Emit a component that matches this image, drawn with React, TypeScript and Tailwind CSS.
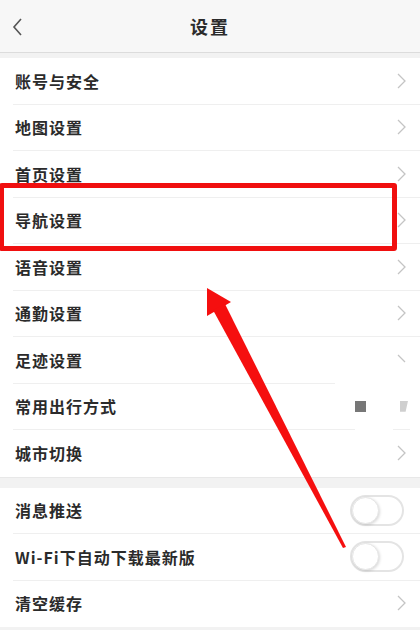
const rows1 = [
  "账号与安全",
  "地图设置",
  "首页设置",
  "导航设置",
  "语音设置",
  "通勤设置",
  "足迹设置",
  "常用出行方式",
  "城市切换",
];

const Chevron = () => (
  <svg width="12" height="18" viewBox="0 0 12 18" className="shrink-0">
    <path d="M2 2 L9 9 L2 16" fill="none" stroke="#c4c4c4" strokeWidth="1.3" />
  </svg>
);

const Toggle = () => (
  <div className="mr-[4px] flex items-center w-[54px] h-[31px] rounded-full border-2 border-[#e4e4e4] bg-white">
    <div className="w-[27px] h-[27px] rounded-full bg-white border border-[#e6e6e6] shadow-[1px_1px_3px_rgba(0,0,0,0.15)]" />
  </div>
);

type RowProps = {
  label: string;
  right?: React.ReactNode;
  divider?: "full" | "none" | "short" | "split";
};

const Divider = ({ kind }: { kind: RowProps["divider"] }) => {
  if (kind === "none") return <div className="h-px" />;
  if (kind === "short")
    return (
      <div className="h-px flex">
        <div className="w-[322px] bg-[#efefef]" />
      </div>
    );
  if (kind === "split")
    return (
      <div className="h-px flex">
        <div className="w-[342px] bg-[#efefef]" />
        <div className="w-[38px]" />
        <div className="w-[17px] bg-[#efefef]" />
      </div>
    );
  return <div className="h-px bg-[#efefef]" />;
};

const Row = ({ label, right, divider = "full" }: RowProps) => (
  <div className="bg-white pl-[13px] flex flex-col">
    <div className="h-[45.5px] flex items-center justify-between pl-[2px] pr-[12px]">
      <span className="text-[16px] font-bold text-[#2b2b2b] tracking-[1px]">{label}</span>
      {right ?? <Chevron />}
    </div>
    <Divider kind={divider} />
  </div>
);

const App = () => {
  return (
    <div
      className="relative w-[420px] h-[630px] overflow-hidden bg-[#f2f2f2] flex flex-col"
      style={{ fontFamily: '"Noto Sans CJK SC", "Noto Sans", sans-serif' }}
    >
      {/* header */}
      <div className="h-[53px] shrink-0 bg-[#f7f7f7] border-b border-[#dcdcdc] grid grid-cols-[60px_1fr_60px] items-center">
        <div className="pl-[11px] pt-[1px] flex items-center">
          <svg width="14" height="20" viewBox="0 0 14 20">
            <path d="M10 2 L3 10 L10 18" fill="none" stroke="#555" strokeWidth="1.6" />
          </svg>
        </div>
        <span className="text-center text-[18px] font-bold text-[#2b2b2b] tracking-[2px]">设置</span>
        <div />
      </div>

      <div className="mt-[5px] flex flex-col">
        {rows1.map((r, i) => {
          if (r === "足迹设置")
            return (
              <Row
                key={r}
                label={r}
                divider="short"
                right={
                  <svg width="12" height="18" viewBox="0 0 12 18">
                    <path d="M2 4 L9 11" fill="none" stroke="#c4c4c4" strokeWidth="1.3" />
                  </svg>
                }
              />
            );
          if (r === "常用出行方式")
            return (
              <Row
                key={r}
                label={r}
                divider="split"
                right={
                  <div className="flex items-center gap-[34px]">
                    <div className="w-[11px] h-[11px] bg-[#777]" />
                    <div className="w-[8px] h-[11px] bg-[#cfcfcf] [clip-path:polygon(0_0,100%_0,70%_100%,0_100%)]" />
                  </div>
                }
              />
            );
          return <Row key={r} label={r} divider={i === rows1.length - 1 ? "none" : "full"} />;
        })}
      </div>

      <div className="h-[11px] shrink-0 border-t border-[#e8e8e8]" />

      <div className="flex flex-col">
        <Row label="消息推送" right={<Toggle />} />
        <Row label="Wi-Fi下自动下载最新版" right={<Toggle />} />
        <Row label="清空缓存" divider="none" />
      </div>

      {/* red highlight box drawn over the list */}
      <div className="absolute left-[-1px] top-[183px] w-[398px] h-[68px] border-[5px] border-[#f00f0f] rounded-[3px]" />

      {/* red arrow drawn over the list */}
      <svg className="absolute left-0 top-0" width="420" height="630" viewBox="0 0 420 630">
        <polygon points="207,288 207,316 231,302" fill="#f50f0f" />
        <polygon points="213,310 225,304 346,547 343,548" fill="#f50f0f" />
      </svg>
    </div>
  );
};

export default App;
